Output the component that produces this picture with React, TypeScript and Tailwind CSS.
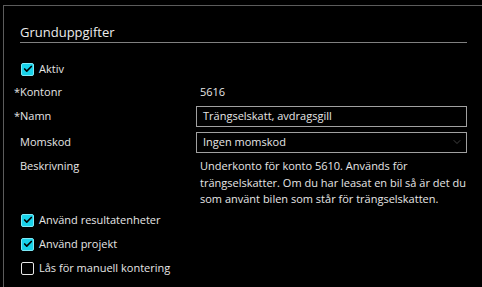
import { Check, ChevronDown } from "lucide-react";

function Box({ checked }: { checked: boolean }) {
  return checked ? (
    <span className="flex h-[13px] w-[13px] items-center justify-center rounded-[2px] border border-[#7ee8f5] bg-[#18d2ea]">
      <Check className="h-[10px] w-[10px] text-black" strokeWidth={4} />
    </span>
  ) : (
    <span className="h-[13px] w-[13px] rounded-[2px] border-[1.5px] border-[#e8e8e8] bg-black" />
  );
}

function CheckRow({ label, checked }: { label: string; checked: boolean }) {
  return (
    <div className="flex h-[24px] items-center gap-[5px] pl-px">
      <Box checked={checked} />
      <span>{label}</span>
    </div>
  );
}

export default function App() {
  return (
    <div
      className="h-[287px] overflow-hidden bg-black pl-[3px] pt-[5px] text-[11px] text-[#e6e6e6]"
      style={{ fontFamily: '"Open Sans", sans-serif' }}
    >
      <div className="h-full border-l border-t border-[#5c5c5c] pl-4 pr-[15px] pt-4">
        {/* rubrik */}
        <h2 className="border-b border-[#808080] text-[13px] leading-[20px] text-[#ececec]">
          Grunduppgifter
        </h2>

        <div className="mt-[14px]">
          <CheckRow label="Aktiv" checked />
        </div>

        <div className="grid grid-cols-[176px_1fr]">
          <div className="flex h-[23px] items-center">
            <span className="-ml-[6px] w-[6px]">*</span>Kontonr
          </div>
          <div className="flex h-[23px] items-center pl-1">5616</div>

          <div className="flex h-[25px] items-center">
            <span className="-ml-[6px] w-[6px]">*</span>Namn
          </div>
          <div className="flex h-[25px] items-center">
            <div className="flex h-[21px] w-full items-center border border-[#a0a0a0] px-[6px]">
              Trängselskatt, avdragsgill
            </div>
          </div>

          <div className="flex h-[26px] items-center">Momskod</div>
          <div className="flex h-[26px] items-center">
            <div className="flex h-[21px] w-full items-center justify-between border border-[#a0a0a0] pl-[6px] pr-[3px]">
              <span>Ingen momskod</span>
              <ChevronDown className="h-[12px] w-[12px] text-[#555]" strokeWidth={1.5} />
            </div>
          </div>

          <div className="h-[53px] pt-[3px] leading-[16.5px]">Beskrivning</div>
          <div className="h-[53px] pl-1 pt-[3px] leading-[16.5px]">
            Underkonto för konto 5610. Används för trängselskatter. Om du har leasat en bil så är det du
            som använt bilen som står för trängselskatten.
          </div>
        </div>

        <div>
          <CheckRow label="Använd resultatenheter" checked />
          <CheckRow label="Använd projekt" checked />
          <CheckRow label="Lås för manuell kontering" checked={false} />
        </div>
      </div>
    </div>
  );
}
